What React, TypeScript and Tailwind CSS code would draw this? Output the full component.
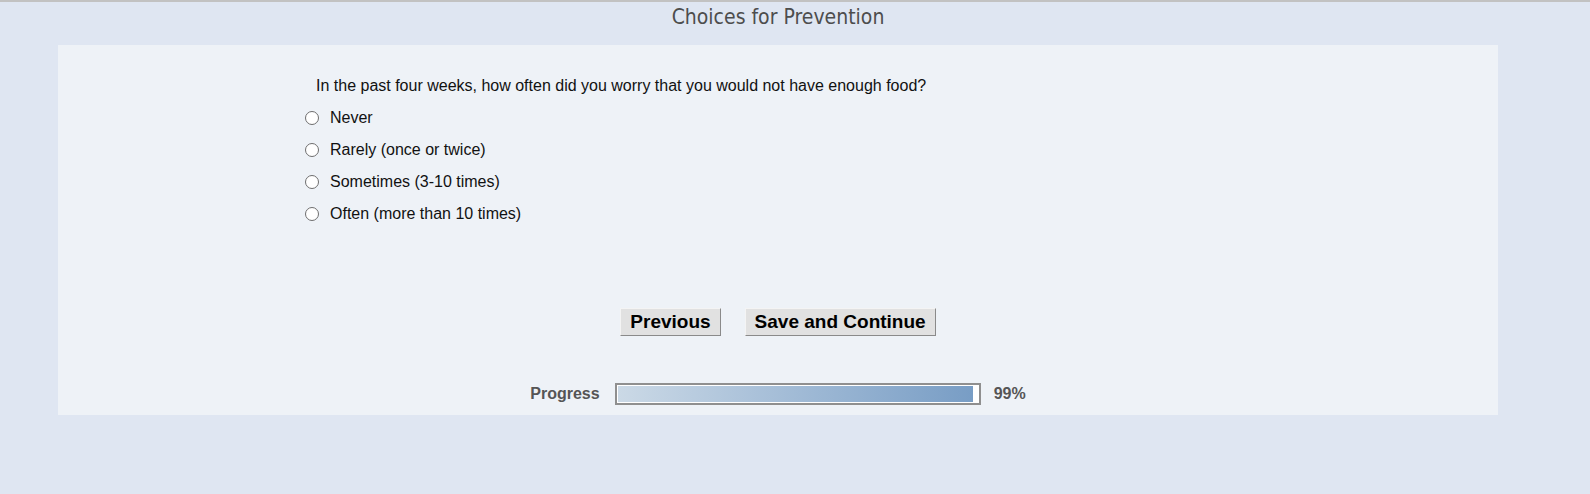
import { useState } from "react";

const options = [
    "Never",
    "Rarely (once or twice)",
    "Sometimes (3-10 times)",
    "Often (more than 10 times)",
];

export default function App() {
    const [ choice, setChoice ] = useState<number | null>(null)
    const progress = 99

    return (
        <div className="min-h-[494px] bg-[#dfe6f2] border-t-2 border-[#c2c2c2] font-['Liberation_Sans',Arial,sans-serif]">
            <div className="ml-[58px] w-[1440px] h-[43px] flex justify-center">
                <h1 className="text-[21px] leading-[30px] text-[#4d4d4d] font-['DejaVu_Sans_Condensed','DejaVu_Sans',sans-serif]">Choices for Prevention</h1>
            </div>

            <div className="ml-[58px] w-[1440px] bg-[#eef2f7] pt-[32px] pb-[9px]">
                <div className="pl-[247px]">
                    <p className="pl-[11px] text-[16px] leading-[18px] text-[#111]">
                        In the past four weeks, how often did you worry that you would not have enough food?
                    </p>
                    <ul className="mt-[7px] flex flex-col">
                        {options.map((label, index) => (
                            <li key={index} className="h-[32px] flex items-center gap-[11px] text-[16px] text-[#111]">
                                <button
                                    className="w-[14px] h-[14px] rounded-full border border-[#6e6e6e] bg-white flex items-center justify-center"
                                    onClick={() => setChoice(index)}
                                >
                                    {choice === index && <span className="w-[8px] h-[8px] rounded-full bg-[#1a73e8]" />}
                                </button>
                                <span className="leading-[18px] -mt-[1px]">{label}</span>
                            </li>
                        ))}
                    </ul>
                </div>

                <div className="mt-[78px] flex justify-center gap-[24px]">
                    <button className="h-[28px] px-[9px] bg-[#e1e1e1] border border-t-[#f4f4f4] border-l-[#f4f4f4] border-b-[#8a8a8a] border-r-[#8a8a8a] text-[19px] leading-[22px] font-bold text-black">Previous</button>
                    <button className="h-[28px] px-[9px] bg-[#e1e1e1] border border-t-[#f4f4f4] border-l-[#f4f4f4] border-b-[#8a8a8a] border-r-[#8a8a8a] text-[19px] leading-[22px] font-bold text-black">Save and Continue</button>
                </div>

                <div className="mt-[46px] flex justify-center items-center">
                    <span className="text-[16px] font-bold text-[#555]">Progress</span>
                    <div className="ml-[15px] w-[366px] h-[22px] border-2 border-[#8f8f8f] bg-white p-[1px] pr-[2px]">
                        <div className="h-full bg-gradient-to-r from-[#cbd9e6] to-[#789dc5]" style={{ width: `${progress}%` }} />
                    </div>
                    <span className="ml-[13px] text-[16px] font-bold text-[#555]">{progress}%</span>
                </div>
            </div>
        </div>
    );
}
